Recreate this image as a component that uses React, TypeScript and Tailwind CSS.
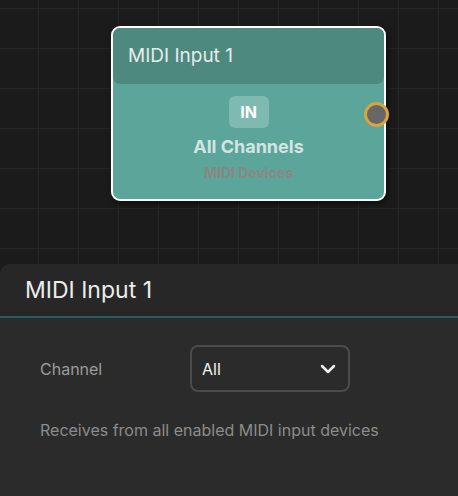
import React from 'react';
import { ChevronDown } from 'lucide-react';

const font = { fontFamily: 'Inter, "Noto Sans", sans-serif' };

function MidiNode() {
  return (
    <div className="absolute left-[111px] top-[26px] w-[275px] h-[175px] rounded-[9px] border-2 border-white bg-[#5ba59a] shadow-[2px_3px_6px_rgba(0,0,0,0.5)]">
      {/* header */}
      <div className="h-[56px] rounded-[7px] bg-[#4e897f] pl-[15px] flex items-center">
        <span className="text-[19px] text-[#e3ecea]">MIDI Input 1</span>
      </div>
      {/* body */}
      <div className="flex flex-col items-center pt-[12px]">
        <div className="w-[40px] h-[32px] rounded-[6px] bg-[#7ebab1] flex items-center justify-center text-[16px] font-bold text-white">
          IN
        </div>
        <div className="mt-[7px] text-[18px] font-bold text-[#d3e4e1] leading-[24px]">All Channels</div>
        <div className="mt-[5px] text-[14px] font-bold text-[#8b8584] leading-[18px]">MIDI Devices</div>
      </div>
      {/* output handle */}
      <div className="absolute right-[-5px] top-[74px] w-[25px] h-[25px] rounded-full border-[3px] border-[#d8a43c] bg-[#676767]" />
    </div>
  );
}

export default function App() {
  return (
    <div
      className="w-[458px] h-[496px] overflow-hidden flex flex-col bg-[#1b1b1b] bg-[linear-gradient(to_right,#262626_1px,transparent_1px),linear-gradient(to_bottom,#262626_1px,transparent_1px)] bg-[size:40px_40px] bg-[position:38px_8px]"
      style={font}
    >
      {/* node canvas */}
      <div className="relative h-[264px] shrink-0">
        <MidiNode />
      </div>

      {/* inspector panel */}
      <div className="flex-1 rounded-tl-[10px] bg-[#2b2b2b] flex flex-col">
        <div className="h-[54px] rounded-tl-[10px] bg-[#272727] border-b-2 border-[#2d5866] pl-[25px] flex items-center">
          <h2 className="text-[23px] text-[#ececec]">MIDI Input 1</h2>
        </div>
        <div className="px-[40px] pt-[27px]">
          <div className="flex items-center">
            <span className="w-[150px] text-[16px] text-[#9b9b9b]">Channel</span>
            <div className="w-[160px] h-[47px] rounded-[8px] border-2 border-[#4b4b4b] flex items-center justify-between pl-[10px] pr-[8px]">
              <span className="text-[16px] text-[#f2f2f2]">All</span>
              <ChevronDown size={24} strokeWidth={2.5} className="text-[#f2f2f2]" />
            </div>
          </div>
          <p className="mt-[26px] text-[16px] text-[#8c8c8c]">Receives from all enabled MIDI input devices</p>
        </div>
      </div>
    </div>
  );
}
